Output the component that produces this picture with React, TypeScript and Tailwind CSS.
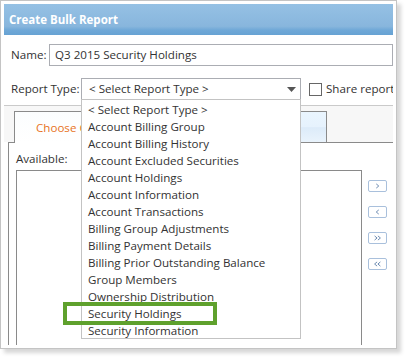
const reportTypes = [
  "< Select Report Type >",
  "Account Billing Group",
  "Account Billing History",
  "Account Excluded Securities",
  "Account Holdings",
  "Account Information",
  "Account Transactions",
  "Billing Group Adjustments",
  "Billing Payment Details",
  "Billing Prior Outstanding Balance",
  "Group Members",
  "Ownership Distribution",
  "Security Holdings",
  "Security Information",
];

function MoveButton({ dir }: { dir: "r" | "l" | "rr" | "ll" }) {
  const paths: Record<string, string> = {
    r: "M8 3.5 L11 6 L8 8.5",
    l: "M11 3.5 L8 6 L11 8.5",
    rr: "M6 3.5 L9 6 L6 8.5 M10 3.5 L13 6 L10 8.5",
    ll: "M9 3.5 L6 6 L9 8.5 M13 3.5 L10 6 L13 8.5",
  };
  return (
    <div className="h-[12px] w-[19px] rounded-[2px] border border-[#a9c0dc] bg-white">
      <svg width="17" height="10" viewBox="0 0 19 12" className="block">
        <path d={paths[dir]} fill="none" stroke="#6f8db3" strokeWidth="1.2" />
      </svg>
    </div>
  );
}

export default function App() {
  return (
    <div className="relative h-[358px] w-[406px] bg-white font-['Open_Sans',sans-serif] text-[11.6px] text-[#333]">
      <div className="flex h-[349px] w-[397px] flex-col border border-[#c4c4c4] bg-white p-[3px] shadow-[4px_4px_4px_rgba(0,0,0,0.16)]">
        <div className="flex min-h-0 flex-1 flex-col overflow-hidden">
          {/* title bar */}
          <div className="flex h-[31px] shrink-0 items-center whitespace-nowrap bg-[linear-gradient(#95c1e4,#88b6dd_72%,#6fa8d7_84%,#67a2d3)] pl-[5px] text-[11.5px] font-bold text-white">
            Create Bulk Report
          </div>

          {/* name */}
          <div className="mt-[9px] flex h-[22px] shrink-0 items-center whitespace-nowrap">
            <span className="w-[45px] shrink-0 pl-[7px]">Name:</span>
            <div className="flex h-full flex-1 items-center border border-[#abadb3] pl-[5px]">
              Q3 2015 Security Holdings
            </div>
          </div>

          {/* report type */}
          <div className="mt-[12px] flex h-[22px] shrink-0 items-center whitespace-nowrap">
            <span className="w-[77px] shrink-0 pl-[7px]">Report Type:</span>
            <div className="flex h-full w-[220px] shrink-0 items-center justify-between border border-[#abadb3] pl-[7px] pr-[3px]">
              <span>&lt; Select Report Type &gt;</span>
              <svg width="9" height="5" viewBox="0 0 9 5" className="mr-[1px]">
                <path d="M0 0 H9 L4.5 5 Z" fill="#555" />
              </svg>
            </div>
            <div className="ml-[8px] h-[13px] w-[13px] shrink-0 border border-[#666] bg-white" />
            <span className="ml-[4px]">Share report</span>
          </div>

          {/* tabs */}
          <div className="mt-[5px] flex h-[37px] shrink-0 items-end border-t border-[#cacaca] bg-[#f7f7f7] pl-[10px]">
            <div className="relative z-10 -mb-px flex h-[32px] w-[150px] items-center whitespace-nowrap border-x border-t border-[#8a8a8a] bg-[linear-gradient(#fbfdfe,#ffffff)] pl-[21px] text-[#e8731d]">
              Choose Columns
            </div>
            <div className="h-[31px] w-[163px] border-r border-t border-[#8a8a8a] bg-[linear-gradient(#eaf5fe_0%,#e6f2fd_50%,#dcebf9_52%,#e9f3fc_100%)]" />
          </div>

          {/* content */}
          <div className="ml-[4px] flex min-h-0 flex-1 flex-col border-l border-t border-[#8a8a8a] bg-white pl-[7px] pt-[7px]">
            <div className="leading-[17px]">Available:</div>
            <div className="mt-[3px] flex min-h-0 flex-1">
              <div className="w-[346px] border-x border-t border-[#8a8a8a]" />
              <div className="ml-[6px] flex flex-col gap-[14px] pt-[10px]">
                <MoveButton dir="r" />
                <MoveButton dir="l" />
                <MoveButton dir="rr" />
                <MoveButton dir="ll" />
              </div>
            </div>
          </div>
        </div>
      </div>

      {/* open dropdown list */}
      <div className="absolute left-[81px] top-[99px] z-20 h-[240px] w-[220px] border border-[#c3c3c3] bg-white pt-px">
        {reportTypes.map((t) => (
          <div key={t} className="whitespace-nowrap pl-[6px] leading-[17px]">
            {t}
          </div>
        ))}
      </div>

      {/* highlight */}
      <div className="absolute left-[63px] top-[302px] z-30 h-[23px] w-[154px] border-[4px] border-[#5fa12d]" />
    </div>
  );
}
